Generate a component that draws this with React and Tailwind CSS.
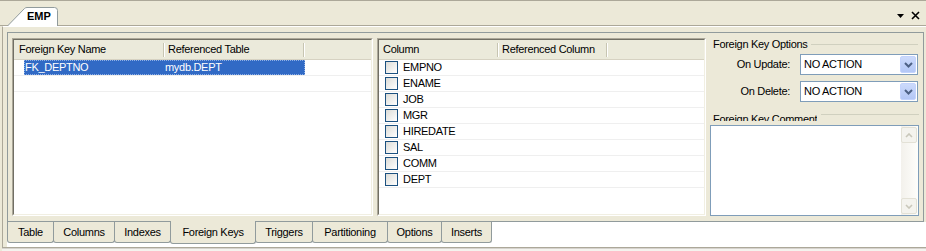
function Sunken({ className, children }) {
  return (
    <div className={"flex border border-t-[#ACA899] border-l-[#ACA899] border-b-white border-r-white " + className}>
      <div className="flex-1 flex flex-col border border-t-[#716F64] border-l-[#716F64] border-b-[#F1EFE2] border-r-[#F1EFE2] bg-white overflow-hidden">
        {children}
      </div>
    </div>
  );
}

function Divider() {
  return <div className="w-[2px] h-[14px] border-l border-l-[#C7C5B2] border-r border-r-white" />;
}

function Combo() {
  return (
    <div className="w-[118px] h-[21px] border border-[#7F9DB9] bg-white flex items-center">
      <span className="flex-1 pl-[3px]">NO ACTION</span>
      <div className="w-[16px] h-[17px] mr-px rounded-[2px] bg-linear-to-b from-[#CCDAFB] to-[#B3C7F6] border border-[#C3D3FD] flex items-center justify-center">
        <svg width="9" height="6" viewBox="0 0 9 6">
          <path d="M1 1 L4.5 4.5 L8 1" stroke="#4D6185" strokeWidth="2" fill="none" />
        </svg>
      </div>
    </div>
  );
}

function Check() {
  return (
    <div className="w-[13px] h-[13px] border border-[#1C5180] bg-linear-to-br from-[#DCDCD7] to-white" />
  );
}

const cols = ["EMPNO", "ENAME", "JOB", "MGR", "HIREDATE", "SAL", "COMM", "DEPT"];
const tabs = [
  { t: "Table", c: "w-[47px]" },
  { t: "Columns", c: "w-[62px] -ml-px" },
  { t: "Indexes", c: "w-[57px] -ml-px" },
  { t: "Foreign Keys", c: "w-[86px] -ml-px -mt-px h-[23px] relative z-10", sel: true },
  { t: "Triggers", c: "w-[58px] -ml-px" },
  { t: "Partitioning", c: "w-[76px] -ml-px" },
  { t: "Options", c: "w-[55px] -ml-px" },
  { t: "Inserts", c: "w-[51px] -ml-px" },
];

export default function App() {
  return (
    <div className="w-[926px] h-[251px] bg-[#ECE9D8] flex flex-col overflow-hidden font-['Liberation_Sans',Arial,sans-serif] text-[11px] leading-[13px] text-black tracking-[-0.3px]">
      {/* top strip */}
      <div className="h-[26px] shrink-0 flex items-end border-t border-b border-[#ACA899] pl-[7px]">
        <div className="relative w-[51px] h-[19px] -mb-px">
          <svg className="absolute inset-0" width="51" height="19" viewBox="0 0 51 19">
            <path d="M0.5 19 L17.5 1.5 Q18.5 0.5 20 0.5 L47.5 0.5 Q50.5 0.5 50.5 3.5 L50.5 19 Z" fill="#fff" stroke="none" />
            <path d="M0.5 19 L17.5 1.5 Q18.5 0.5 20 0.5 L47.5 0.5 Q50.5 0.5 50.5 3.5 L50.5 19" fill="none" stroke="#919B9C" />
          </svg>
          <div className="relative pl-[20px] pt-[3px] font-bold tracking-normal">EMP</div>
        </div>
        <div className="flex-1" />
        <div className="flex items-end gap-[7px] mr-[6px] mb-[5px]">
          <svg width="7" height="4" viewBox="0 0 7 4" className="mb-[2px]">
            <path d="M0 0 L7 0 L3.5 4 Z" fill="#000" />
          </svg>
          <svg width="9" height="9" viewBox="0 0 9 9">
            <path d="M1 1 L8 8 M8 1 L1 8" stroke="#000" strokeWidth="1.6" fill="none" />
          </svg>
        </div>
      </div>

      {/* main */}
      <div className="h-[221px] shrink-0 flex flex-col ml-[2px] border-l border-t border-l-[#ACA899] border-t-white">
        <div className="ml-[4px] mt-[5px] w-[917px] h-[190px] border border-[#919B9C] flex gap-[4px] py-[5px] px-[4px]">
          {/* left list */}
          <Sunken className="w-[361px] h-[178px]">
            <div className="h-[20px] shrink-0 flex items-center bg-[#EBEADB] border-b border-b-[#D6D2C2]">
              <div className="w-[149px] pl-[5px]">Foreign Key Name</div>
              <Divider />
              <div className="w-[138px] pl-[3px]">Referenced Table</div>
              <Divider />
            </div>
            <div className="h-[16px] shrink-0 flex border-b border-b-[#EFEFEF]">
              <div className="w-[10px]" />
              <div className="w-[281px] h-[15px] flex items-center bg-[#316AC5] text-white border border-dotted border-[#8FB0E6]">
                <div className="w-[140px]">FK_DEPTNO</div>
                <div>mydb.DEPT</div>
              </div>
            </div>
            <div className="h-[16px] shrink-0 border-b border-b-[#EFEFEF]" />
          </Sunken>

          {/* middle list */}
          <Sunken className="w-[329px] h-[178px]">
            <div className="h-[20px] shrink-0 flex items-center bg-[#EBEADB] border-b border-b-[#D6D2C2]">
              <div className="w-[118px] pl-[4px]">Column</div>
              <Divider />
              <div className="w-[107px] pl-[3px]">Referenced Column</div>
              <Divider />
            </div>
            {cols.map((c) => (
              <div key={c} className="h-[16px] shrink-0 flex items-center border-b border-b-[#EFEFEF] pl-[6px]">
                <Check />
                <span className="ml-[5px]">{c}</span>
              </div>
            ))}
          </Sunken>

          {/* right options */}
          <div className="w-[209px] h-[178px] flex flex-col">
            <div className="h-[13px] flex items-center pl-[3px] pr-px">
              <span>Foreign Key Options</span>
              <div className="ml-[3px] flex-1 h-px bg-[#D0D0BF]" />
            </div>
            <div className="mt-[3px] flex items-center pr-px">
              <div className="w-[80px] text-right">On Update:</div>
              <div className="ml-[10px]">
                <Combo />
              </div>
            </div>
            <div className="mt-[6px] flex items-center pr-px">
              <div className="w-[80px] text-right">On Delete:</div>
              <div className="ml-[10px]">
                <Combo />
              </div>
            </div>
            <div className="mt-[8px] h-[15px] flex pl-[3px]">
              <div className="h-[11px] overflow-hidden pt-[3px]">Foreign Key Comment</div>
              <div className="ml-[4px] mt-[4px] flex-1 h-px bg-[#D0D0BF]" />
            </div>
            <div className="h-[91px] border border-[#7F9DB9] bg-white flex justify-end">
              <div className="w-[17px] h-full bg-linear-to-r from-[#F3F1EC] to-[#FEFEFB] flex flex-col justify-between py-px">
                <div className="w-[16px] h-[16px] rounded-[2px] border border-[#E3E1D6] bg-[#F4F3EE] flex items-center justify-center">
                  <svg width="8" height="5" viewBox="0 0 8 5">
                    <path d="M1 4 L4 1 L7 4" stroke="#C9C7BA" strokeWidth="1.6" fill="none" />
                  </svg>
                </div>
                <div className="w-[16px] h-[16px] rounded-[2px] border border-[#E3E1D6] bg-[#F4F3EE] flex items-center justify-center">
                  <svg width="8" height="5" viewBox="0 0 8 5">
                    <path d="M1 1 L4 4 L7 1" stroke="#C9C7BA" strokeWidth="1.6" fill="none" />
                  </svg>
                </div>
              </div>
            </div>
          </div>
        </div>

        {/* bottom tabs */}
        <div className="h-[25px] flex">
          <div className="w-[4px]" />
          <div className="flex items-start bg-white">
            {tabs.map((tb) => (
              <div
                key={tb.t}
                className={
                  "h-[21px] flex items-center justify-center border-x border-b border-[#919B9C] rounded-b-[3px] bg-[#ECE9D8] " +
                  tb.c
                }
              >
                {tb.t}
              </div>
            ))}
          </div>
          <div className="flex-1 bg-white" />
        </div>
      </div>

      {/* bottom lines */}
      <div className="h-[4px] shrink-0 ml-[2px] border-t border-[#ACA899] bg-[#F4F3EE]">
        <div className="h-px bg-[#D6D3CE]" />
      </div>
    </div>
  );
}
